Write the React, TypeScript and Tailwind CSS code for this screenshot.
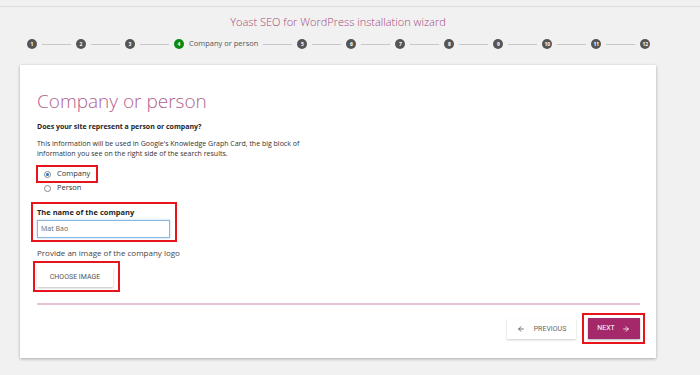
import { ArrowLeft, ArrowRight } from "lucide-react";

const steps = ["1", "2", "3", "4", "5", "6", "7", "8", "9", "10", "11", "12"];

function StepDot({ n, active }: { n: string; active?: boolean }) {
  return (
    <div
      className={`flex h-[10px] w-[10px] shrink-0 items-center justify-center rounded-full text-[5px] font-bold leading-none text-white ${
        active ? "bg-[#0a8a12]" : "bg-[#555]"
      }`}
    >
      {n}
    </div>
  );
}

function Stepper() {
  return (
    <div className="flex h-[14px] items-center pl-[27px]">
      {steps.map((n, i) => (
        <div key={n} className="flex items-center">
          {i > 0 && <div className="mx-[5px] h-px w-[29px] bg-[#c8c8c8]" />}
          <StepDot n={n} active={n === "4"} />
          {n === "4" && <span className="ml-[5px] text-[7.5px] text-[#555]">Company or person</span>}
        </div>
      ))}
    </div>
  );
}

export default function App() {
  return (
    <div className="h-[375px] w-[700px] overflow-hidden bg-[#f1f1f1] font-['Open_Sans',_'Noto_Sans',sans-serif]">
      <div className="h-[7px] border-b border-[#dcdcdc]" />
      <div className="pr-[24px] pt-[7px] text-center text-[11px] font-light leading-[16px] text-[#a4477a]">
        Yoast SEO for WordPress installation wizard
      </div>
      <div className="mt-[7px]">
        <Stepper />
      </div>

      <div className="ml-[20px] mt-[14px] h-[293px] w-[636px] bg-white px-[17px] pt-[23px] shadow-[0_1px_3px_rgba(0,0,0,0.3)]">
        <h1 className="text-[19px] font-light leading-[26px] text-[#b0628d]">Company or person</h1>
        <p className="mt-[8px] text-[7px] font-bold leading-[10px] text-[#1e1e1e]">
          Does your site represent a person or company?
        </p>
        <p className="mt-[7px] w-[280px] text-[7px] leading-[10px] text-[#333]">
          This information will be used in Google's Knowledge Graph Card, the big block of information you see on the
          right side of the search results.
        </p>

        <div className="mt-[6px] flex flex-col">
          <div className="-ml-[1px] flex h-[18px] w-[62px] items-center gap-[6px] border-2 border-[#e8141b] pl-[6px]">
            <span className="flex h-[7px] w-[7px] items-center justify-center rounded-full border border-[#888]">
              <span className="h-[3px] w-[3px] rounded-full bg-[#1e73be]" />
            </span>
            <span className="text-[7.5px] text-[#333]">Company</span>
          </div>
          <div className="flex h-[10px] items-center gap-[6px] pl-[7px]">
            <span className="h-[7px] w-[7px] rounded-full border border-[#888]" />
            <span className="text-[7.5px] text-[#333]">Person</span>
          </div>
        </div>

        <div className="-ml-[6px] mt-[9px] h-[40px] w-[146px] border-2 border-[#e8141b] pl-[4px] pt-[3px]">
          <div className="text-[7.5px] font-bold leading-[10px] text-[#1e1e1e]">The name of the company</div>
          <div className="mt-[3px] flex h-[18px] w-[133px] items-center border border-[#8ab8e0] px-[3px] text-[7px] text-[#666] shadow-[0_0_2px_rgba(90,160,220,0.5)]">
            Mat Bao
          </div>
        </div>

        <p className="mt-[6px] text-[8px] leading-[10px] text-[#444]">Provide an image of the company logo</p>

        <div className="-ml-[4px] mt-[3px] h-[31px] w-[87px] border-2 border-[#e8141b] pl-[2px] pt-[4px]">
          <div className="flex h-[20px] w-[76px] items-center justify-center bg-white font-['Roboto',sans-serif] text-[7px] text-[#555] shadow-[0_1px_2px_rgba(0,0,0,0.25)]">
            CHOOSE IMAGE
          </div>
        </div>

        <div className="mt-[11px] h-[2px] w-[603px] bg-[#e6c3d6]" />

        <div className="mt-[8px] flex w-[608px] justify-end gap-[6px]">
          <div className="mt-[6px] flex h-[20px] w-[69px] items-center justify-center gap-[9px] bg-white font-['Roboto',sans-serif] text-[7px] text-[#666] shadow-[0_1px_2px_rgba(0,0,0,0.2)]">
            <ArrowLeft size={8} strokeWidth={2.5} className="text-[#555]" />
            PREVIOUS
          </div>
          <div className="flex h-[31px] w-[63px] items-center justify-center border-2 border-[#e8141b]">
            <div className="flex h-[21px] w-[52px] items-center justify-center gap-[7px] bg-[#a4286a] font-['Roboto',sans-serif] text-[7px] text-white shadow-[0_1px_2px_rgba(0,0,0,0.3)]">
              NEXT
              <ArrowRight size={8} strokeWidth={2.5} />
            </div>
          </div>
        </div>
      </div>
    </div>
  );
}
